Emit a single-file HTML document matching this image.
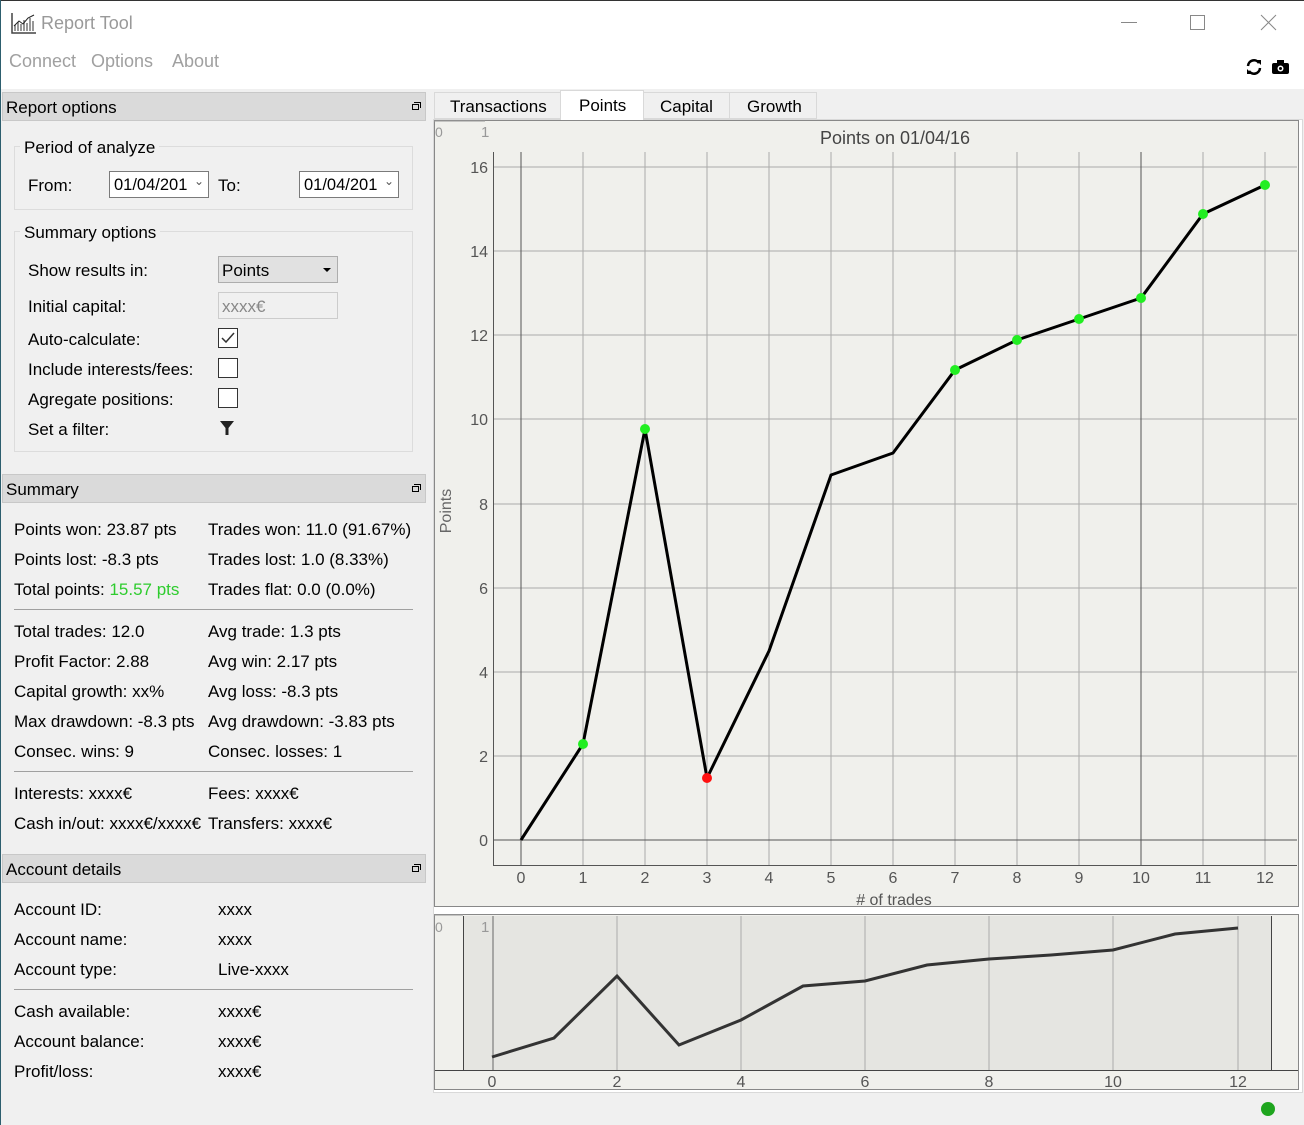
<!DOCTYPE html>
<html><head><meta charset="utf-8"><style>
*{margin:0;padding:0;box-sizing:border-box}
body{width:1304px;height:1125px;background:#f0f0f0;font-family:"Liberation Sans",sans-serif;font-size:17px;color:#000;position:relative;overflow:hidden}
.a{position:absolute;white-space:nowrap}
.t{margin-top:1px}
.hdr{position:absolute;left:2px;width:424px;height:29px;background:#dadada;border:1px solid #c8c8c8}
.hdr span{position:absolute;left:3px;top:5px;font-size:17px}
.hdr i{position:absolute;right:6px;top:11px;width:7px;height:6px;border:1.5px solid #000;}
.hdr b{position:absolute;right:4px;top:9px;width:7px;height:6px;border-top:1.5px solid #000;border-right:1.5px solid #000}
.grp{position:absolute;border:1px solid #dcdcdc}
.cb{position:absolute;width:20px;height:20px;border:1px solid #333;background:#fff}
.sep{position:absolute;left:14px;width:399px;height:1px;background:#a0a0a0}
</style></head><body>
<div class="a" style="left:0;top:0;width:1304px;height:89px;background:#fff"></div>
<div class="a" style="left:0;top:0;width:1304px;height:1px;background:#333"></div>
<div class="a" style="left:0;top:0;width:1px;height:1125px;background:#2d5e6e"></div>
<svg class="a" style="left:11px;top:12px" width="26" height="22"><path d="M1 1V21H25" stroke="#444" fill="none" stroke-width="1.5"/><path d="M4 19V13M7 19V10M10 19V12M13 19V8M16 19V11M19 19V6M22 19V9" stroke="#777" stroke-width="1.5"/><path d="M3 14L8 9L12 12L17 6L23 3" stroke="#222" fill="none"/></svg>
<div class="a" style="left:41px;top:13px;font-size:18px;color:#999">Report Tool</div>
<div class="a" style="left:1121px;top:22px;width:16px;height:1px;background:#888"></div>
<div class="a" style="left:1190px;top:15px;width:15px;height:15px;border:1px solid #888"></div>
<svg class="a" style="left:1260px;top:14px" width="17" height="17"><path d="M1 1L16 16M16 1L1 16" stroke="#888"/></svg>
<div class="a" style="left:9px;top:51px;font-size:18px;color:#a0a0a0">Connect</div>
<div class="a" style="left:91px;top:51px;font-size:18px;color:#a0a0a0">Options</div>
<div class="a" style="left:172px;top:51px;font-size:18px;color:#a0a0a0">About</div>
<svg class="a" style="left:1245px;top:58px" width="18" height="18"><path d="M3 8A6 6 0 0 1 14 5M15 10A6 6 0 0 1 4 13" stroke="#000" stroke-width="2.5" fill="none"/><path d="M11 2L16 2L16 7Z M2 11L2 16L7 16Z" fill="#000"/></svg>
<svg class="a" style="left:1272px;top:60px" width="18" height="15"><rect x="0" y="3" width="17" height="11" rx="2" fill="#000"/><rect x="5" y="0" width="7" height="4" fill="#000"/><circle cx="8.5" cy="8.5" r="3" fill="#fff"/><circle cx="8.5" cy="8.5" r="1.5" fill="#000"/></svg>

<div class="hdr" style="top:92px"><span>Report options</span><b></b><i></i></div>
<div class="grp" style="left:14px;top:146px;width:399px;height:64px"></div>
<div class="a" style="left:20px;top:138px;background:#f0f0f0;padding:0 4px">Period of analyze</div>
<div class="a" style="left:28px;top:176px">From:</div>
<div class="a" style="left:109px;top:171px;width:100px;height:27px;border:1px solid #7a7a7a;background:#fff;padding:4px 4px;font-size:16.5px">01/04/201<span style="position:absolute;right:4px;top:2px;font-size:12px;color:#555">&#8964;</span></div>
<div class="a" style="left:218px;top:176px">To:</div>
<div class="a" style="left:299px;top:171px;width:100px;height:27px;border:1px solid #7a7a7a;background:#fff;padding:4px 4px;font-size:16.5px">01/04/201<span style="position:absolute;right:4px;top:2px;font-size:12px;color:#555">&#8964;</span></div>

<div class="grp" style="left:14px;top:231px;width:399px;height:221px"></div>
<div class="a" style="left:20px;top:223px;background:#f0f0f0;padding:0 4px">Summary options</div>
<div class="a" style="left:28px;top:261px">Show results in:</div>
<div class="a" style="left:218px;top:256px;width:120px;height:27px;border:1px solid #adadad;background:#e1e1e1;padding:4px 3px">Points<span style="position:absolute;right:6px;top:11px;border:4px solid transparent;border-top:4px solid #000;border-bottom:0"></span></div>
<div class="a" style="left:28px;top:297px">Initial capital:</div>
<div class="a" style="left:218px;top:292px;width:120px;height:27px;border:1px solid #ccc;background:#f0f0f0;padding:4px 3px;color:#888">xxxx€</div>
<div class="a" style="left:28px;top:330px">Auto-calculate:</div>
<div class="cb" style="left:218px;top:328px"><svg width="18" height="18"><path d="M3 9L7 13L15 4" stroke="#333" stroke-width="1.5" fill="none"/></svg></div>
<div class="a" style="left:28px;top:360px">Include interests/fees:</div>
<div class="cb" style="left:218px;top:358px"></div>
<div class="a" style="left:28px;top:390px">Agregate positions:</div>
<div class="cb" style="left:218px;top:388px"></div>
<div class="a" style="left:28px;top:420px">Set a filter:</div>
<svg class="a" style="left:220px;top:420px" width="16" height="16"><path d="M0 1H14L8.5 8V15H5.5V8Z" fill="#222"/></svg>

<div class="hdr" style="top:474px"><span>Summary</span><b></b><i></i></div>
<div class="a" style="left:14px;top:520px">Points won: 23.87 pts</div>
<div class="a" style="left:208px;top:520px">Trades won: 11.0 (91.67%)</div>
<div class="a" style="left:14px;top:550px">Points lost: -8.3 pts</div>
<div class="a" style="left:208px;top:550px">Trades lost: 1.0 (8.33%)</div>
<div class="a" style="left:14px;top:580px">Total points: <span style="color:#2ecc2e">15.57 pts</span></div>
<div class="a" style="left:208px;top:580px">Trades flat: 0.0 (0.0%)</div>
<div class="sep" style="top:609px"></div>
<div class="a" style="left:14px;top:622px">Total trades: 12.0</div>
<div class="a" style="left:208px;top:622px">Avg trade: 1.3 pts</div>
<div class="a" style="left:14px;top:652px">Profit Factor: 2.88</div>
<div class="a" style="left:208px;top:652px">Avg win: 2.17 pts</div>
<div class="a" style="left:14px;top:682px">Capital growth: xx%</div>
<div class="a" style="left:208px;top:682px">Avg loss: -8.3 pts</div>
<div class="a" style="left:14px;top:712px">Max drawdown: -8.3 pts</div>
<div class="a" style="left:208px;top:712px">Avg drawdown: -3.83 pts</div>
<div class="a" style="left:14px;top:742px">Consec. wins: 9</div>
<div class="a" style="left:208px;top:742px">Consec. losses: 1</div>
<div class="sep" style="top:771px"></div>
<div class="a" style="left:14px;top:784px">Interests: xxxx€</div>
<div class="a" style="left:208px;top:784px">Fees: xxxx€</div>
<div class="a" style="left:14px;top:814px">Cash in/out: xxxx€/xxxx€</div>
<div class="a" style="left:208px;top:814px">Transfers: xxxx€</div>

<div class="hdr" style="top:854px"><span>Account details</span><b></b><i></i></div>
<div class="a" style="left:14px;top:900px">Account ID:</div><div class="a" style="left:218px;top:900px">xxxx</div>
<div class="a" style="left:14px;top:930px">Account name:</div><div class="a" style="left:218px;top:930px">xxxx</div>
<div class="a" style="left:14px;top:960px">Account type:</div><div class="a" style="left:218px;top:960px">Live-xxxx</div>
<div class="sep" style="top:989px"></div>
<div class="a" style="left:14px;top:1002px">Cash available:</div><div class="a" style="left:218px;top:1002px">xxxx€</div>
<div class="a" style="left:14px;top:1032px">Account balance:</div><div class="a" style="left:218px;top:1032px">xxxx€</div>
<div class="a" style="left:14px;top:1062px">Profit/loss:</div><div class="a" style="left:218px;top:1062px">xxxx€</div>

<div class="a" style="left:433px;top:119px;width:870px;height:974px;background:#fff;border:1px solid #d9d9d9"></div>
<div class="a" style="left:434px;top:92px;width:127px;height:27px;border:1px solid #d9d9d9;background:#f0f0f0;padding:4px 0 0 15px">Transactions</div>
<div class="a" style="left:560px;top:90px;width:84px;height:30px;border:1px solid #d9d9d9;border-bottom:none;background:#fff;padding:5px 0 0 18px">Points</div>
<div class="a" style="left:643px;top:92px;width:87px;height:27px;border:1px solid #d9d9d9;background:#f0f0f0;padding:4px 0 0 16px">Capital</div>
<div class="a" style="left:729px;top:92px;width:88px;height:27px;border:1px solid #d9d9d9;background:#f0f0f0;padding:4px 0 0 17px">Growth</div>

<svg class="a" style="left:0;top:0" width="1304" height="1125" font-family="Liberation Sans Narrow, Liberation Sans, sans-serif">
<rect x="434.5" y="120.5" width="864" height="786" fill="#f0f0ec" stroke="#888"/>
<line x1="434" y1="121" x2="485" y2="121" stroke="#999"/>
<text x="435" y="137" fill="#999" font-size="14">0</text><text x="481" y="137" fill="#999" font-size="15">1</text>
<text x="895" y="144" text-anchor="middle" fill="#444" font-size="18" font-family="Liberation Sans">Points on 01/04/16</text>
<g stroke="#aaa">
<line x1="583" y1="152" x2="583" y2="865"/><line x1="645" y1="152" x2="645" y2="865"/><line x1="707" y1="152" x2="707" y2="865"/><line x1="769" y1="152" x2="769" y2="865"/><line x1="831" y1="152" x2="831" y2="865"/><line x1="893" y1="152" x2="893" y2="865"/><line x1="955" y1="152" x2="955" y2="865"/><line x1="1017" y1="152" x2="1017" y2="865"/><line x1="1079" y1="152" x2="1079" y2="865"/><line x1="1203" y1="152" x2="1203" y2="865"/><line x1="1265" y1="152" x2="1265" y2="865"/>
<line x1="493" y1="167" x2="1297" y2="167"/><line x1="493" y1="251" x2="1297" y2="251"/><line x1="493" y1="335" x2="1297" y2="335"/><line x1="493" y1="419" x2="1297" y2="419"/><line x1="493" y1="504" x2="1297" y2="504"/><line x1="493" y1="588" x2="1297" y2="588"/><line x1="493" y1="672" x2="1297" y2="672"/><line x1="493" y1="756" x2="1297" y2="756"/>
</g>
<g stroke="#555"><line x1="521" y1="152" x2="521" y2="865"/><line x1="1141" y1="152" x2="1141" y2="865"/><line x1="493" y1="840" x2="1297" y2="840"/><line x1="493.5" y1="152" x2="493.5" y2="866"/><line x1="493" y1="865.5" x2="1297" y2="865.5"/></g>
<g fill="#555" font-size="16" text-anchor="end">
<text x="488" y="173">16</text><text x="488" y="257">14</text><text x="488" y="341">12</text><text x="488" y="425">10</text><text x="488" y="510">8</text><text x="488" y="594">6</text><text x="488" y="678">4</text><text x="488" y="762">2</text><text x="488" y="846">0</text></g>
<g fill="#555" font-size="16" text-anchor="middle">
<text x="521" y="883">0</text><text x="583" y="883">1</text><text x="645" y="883">2</text><text x="707" y="883">3</text><text x="769" y="883">4</text><text x="831" y="883">5</text><text x="893" y="883">6</text><text x="955" y="883">7</text><text x="1017" y="883">8</text><text x="1079" y="883">9</text><text x="1141" y="883">10</text><text x="1203" y="883">11</text><text x="1265" y="883">12</text>
<text x="894" y="905">#  of trades</text></g>
<text transform="translate(451 511) rotate(-90)" text-anchor="middle" fill="#666" font-size="16">Points</text>
<polyline points="521,840 583,744 645,429 707,778 769,651 831,475 893,453 955,370 1017,340 1079,319 1141,298 1203,214 1265,185" fill="none" stroke="#000" stroke-width="3"/>
<g fill="#22ee22"><circle cx="583" cy="744" r="5"/><circle cx="645" cy="429" r="5"/><circle cx="955" cy="370" r="5"/><circle cx="1017" cy="340" r="5"/><circle cx="1079" cy="319" r="5"/><circle cx="1141" cy="298" r="5"/><circle cx="1203" cy="214" r="5"/><circle cx="1265" cy="185" r="5"/></g>
<circle cx="707" cy="778" r="5" fill="#ff1111"/>

<rect x="434.5" y="914.5" width="864" height="175" fill="#f0f0ec" stroke="#888"/>
<rect x="463" y="916" width="808" height="154" fill="#e5e5e1"/>
<line x1="434" y1="915" x2="463" y2="915" stroke="#999"/>
<text x="435" y="932" fill="#999" font-size="14">0</text><text x="481" y="932" fill="#999" font-size="15">1</text>
<g stroke="#aaa"><line x1="617" y1="916" x2="617" y2="1070"/><line x1="741" y1="916" x2="741" y2="1070"/><line x1="865" y1="916" x2="865" y2="1070"/><line x1="989" y1="916" x2="989" y2="1070"/><line x1="1113" y1="916" x2="1113" y2="1070"/><line x1="1238" y1="916" x2="1238" y2="1070"/></g>
<g stroke="#444"><line x1="463.5" y1="916" x2="463.5" y2="1070"/><line x1="1271.5" y1="916" x2="1271.5" y2="1070"/><line x1="493" y1="916" x2="493" y2="1070" stroke="#666"/><line x1="435" y1="1070.5" x2="1298" y2="1070.5"/></g>
<polyline points="492,1057 554,1038 617,976 679,1045 741,1020 803,986 865,981 927,965 989,959 1051,955 1113,950 1175,934 1238,928" fill="none" stroke="#333" stroke-width="3"/>
<g fill="#555" font-size="16" text-anchor="middle"><text x="492" y="1087">0</text><text x="617" y="1087">2</text><text x="741" y="1087">4</text><text x="865" y="1087">6</text><text x="989" y="1087">8</text><text x="1113" y="1087">10</text><text x="1238" y="1087">12</text></g>
<ellipse cx="1268" cy="1109" rx="7" ry="7" fill="#1ea51e"/>
</svg>
</body></html>
